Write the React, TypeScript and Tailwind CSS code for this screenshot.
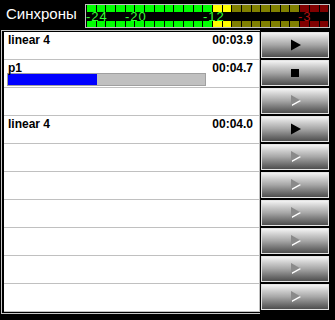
import React from 'react';

type Btn = 'play' | 'stop' | 'off';

interface Cue {
  name?: string;
  time?: string;
  progress?: number;
  btn: Btn;
}

const cues: Cue[] = [
  { name: 'linear 4', time: '00:03.9', btn: 'play' },
  { name: 'p1', time: '00:04.7', progress: 45, btn: 'stop' },
  { btn: 'off' },
  { name: 'linear 4', time: '00:04.0', btn: 'play' },
  { btn: 'off' },
  { btn: 'off' },
  { btn: 'off' },
  { btn: 'off' },
  { btn: 'off' },
  { btn: 'off' },
];

// 25 segments: 13 green, 2 yellow, 7 olive, 3 red
const segClass = (i: number) =>
  i < 13 ? 'bg-[#00ff00]' : i < 15 ? 'bg-[#ffff00]' : i < 22 ? 'bg-[#808000]' : 'bg-[#800000]';

const SegRow: React.FC<{ h: string }> = ({ h }) => (
  <div className={`flex gap-[1px] px-[1px] ${h}`}>
    {Array.from({ length: 25 }).map((_, i) => (
      <div key={i} className={`flex-1 ${segClass(i)}`} />
    ))}
  </div>
);

const labels = [
  { text: '-24', left: 0, cls: 'text-[#33ff33]' },
  { text: '-20', left: 39, cls: 'text-[#33ff33]' },
  { text: '-12', left: 117, cls: 'text-[#33ff33]' },
  { text: '-3', left: 212, cls: 'text-[#b01010]' },
];

const Meter = () => (
  <div className="mt-[4px] w-[245px] h-[24px] border border-[#c0c0c0] flex flex-col">
    <SegRow h="h-[7px]" />
    <div className="relative h-[9px] text-[13px] leading-[9px] tracking-[1px]">
      {labels.map(l => (
        <span key={l.text} className={`absolute top-0 ${l.cls}`} style={{ left: l.left }}>
          {l.text}
        </span>
      ))}
    </div>
    <SegRow h="h-[6px]" />
  </div>
);

const Icon: React.FC<{ kind: Btn }> = ({ kind }) => {
  if (kind === 'stop') {
    return <div className="w-[8px] h-[8px] bg-black" />;
  }
  if (kind === 'play') {
    return (
      <svg width="12" height="12" viewBox="0 0 12 12" className="ml-[2px]">
        <path d="M1 0.5 L11 6 L1 11.5 Z" fill="#000" />
      </svg>
    );
  }
  return (
    <svg width="12" height="12" viewBox="0 0 12 12" className="ml-[2px]">
      <path d="M2 1 L11 6 L2 11 Z" fill="#fff" />
      <path d="M1 0 L10 5 L1 10 Z" fill="#8a8a8a" />
    </svg>
  );
};

export default function App() {
  return (
    <div className="w-[335px] h-[320px] bg-black overflow-hidden font-['Liberation_Sans',Arial,sans-serif]">
      <div className="h-[30px] flex items-start">
        <div className="w-[85px] pl-[6px] pt-[5px] text-white text-[15px] leading-[17px]">Синхроны</div>
        <Meter />
      </div>
      <div className="flex items-start">
        <div className="ml-[1px] w-[259px] border-l border-t border-b border-[#c8c8c8] pl-[2px] pt-[1px] pb-[1px]">
          <div className="bg-white border-r border-[#c0c0c0]">
            {cues.map((c, i) => (
              <div key={i} className="h-[28px] border-b border-[#c0c0c0] pl-[4px] pr-[6px] pt-[2px] text-black text-[12px] font-bold leading-[12px]">
                {c.name && (
                  <div className="flex justify-between">
                    <span>{c.name}</span>
                    <span>{c.time}</span>
                  </div>
                )}
                {c.progress !== undefined && (
                  <div className="mt-[-1px] ml-[-1px] w-[199px] h-[13px] border border-[#a0a0a0] bg-[#c0c0c0]">
                    <div className="h-full bg-[#0000ff]" style={{ width: `${c.progress}%` }} />
                  </div>
                )}
              </div>
            ))}
          </div>
        </div>
        <div className="ml-[1px] pt-[2px] w-[68px] flex flex-col gap-[2px]">
          {cues.map((c, i) => (
            <div
              key={i}
              className="h-[26px] border border-[#e4e4e4] bg-gradient-to-b from-[#f2f2f2] via-[#a6a6a6] to-[#4e4e4e] flex items-center justify-center"
            >
              <Icon kind={c.btn} />
            </div>
          ))}
        </div>
      </div>
    </div>
  );
}
